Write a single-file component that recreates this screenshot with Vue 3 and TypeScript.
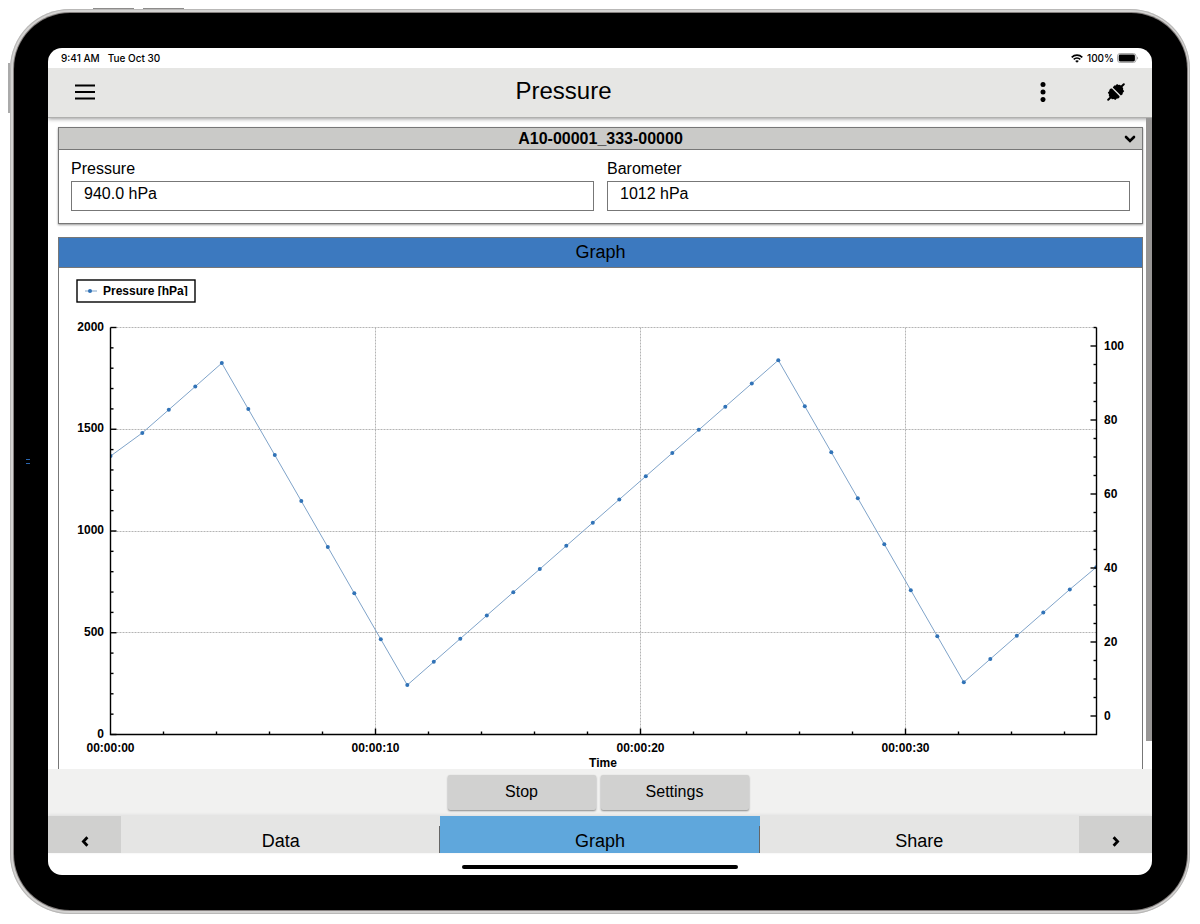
<script setup lang="ts">
import { ref } from 'vue'

interface Point { t: number; v: number }

const pressure = ref('940.0 hPa')
const barometer = ref('1012 hPa')
const activeTab = ref('Graph')
const tabs: string[] = ['Data', 'Graph', 'Share']

const readings: number[] = [
  1482, 1596, 1710, 1825, 1599, 1373, 1147, 921, 694, 468, 243,
  357, 471, 585, 699, 813, 927, 1041, 1155, 1269, 1383, 1497, 1611, 1725, 1839,
  1613, 1387, 1161, 935, 709, 483, 257, 371, 485, 599, 713, 822,
]
const points: Point[] = [{ t: 0, v: 1368 }, ...readings.map((v, i) => ({ t: i + 1.2, v }))]

const left = 51.5
const right = 1037.5
const top = 59.5
const bottom = 466.5
const perSecond = 26.5

const sx = (t: number): number => left + t * perSecond
const sy = (v: number): number => bottom - (v / 2000) * (bottom - top)
const sr = (v: number): number => bottom - ((v + 5) / 110) * (bottom - top)
const crisp = (n: number): number => Math.floor(n) + 0.5

const range = (from: number, to: number, step: number): number[] =>
  Array.from({ length: Math.floor((to - from) / step) + 1 }, (_, i) => from + i * step)

const leftTicks = range(0, 2000, 100)
const leftLabels = range(0, 2000, 500)
const rightTicks = range(0, 100, 5)
const rightLabels = range(0, 100, 20)
const timeTicks = range(2, 36, 2)
const timeLabels = range(0, 30, 10)
const clock = (s: number): string => `00:00:${String(s).padStart(2, '0')}`
const line = points.map((p) => `${sx(p.t)},${sy(p.v)}`).join(' ')
</script>

<template>
  <div class="page">
    <div class="device">
      <span class="hw power"></span>
      <span class="hw vol-a"></span>
      <span class="hw vol-b"></span>
      <div class="bezel">
        <span class="camera"></span>
        <div class="screen">
          <div class="status">
            <span>9:41 AM</span>
            <span>Tue Oct 30</span>
            <span class="spacer"></span>
            <svg class="wifi" width="12" height="9" viewBox="0 0 12 9" fill="none" stroke="#000" stroke-width="1.6">
              <path d="M0.7 3.4C3.7 0.4 8.3 0.4 11.3 3.4" />
              <path d="M2.7 5.4C4.6 3.6 7.4 3.6 9.3 5.4" />
              <path d="M6 8.8L4.2 6.9C5.2 6 6.8 6 7.8 6.9Z" fill="#000" stroke="none" />
            </svg>
            <span class="percent">100%</span>
            <svg width="22" height="10" viewBox="0 0 22 10">
              <rect x="0.5" y="0.5" width="18.5" height="9" rx="2.6" fill="#fff" stroke="#aaa" />
              <rect x="1.7" y="1.6" width="16.2" height="6.8" rx="1.4" fill="#000" />
              <path d="M20.2 3.4c1.2.5 1.2 2.7 0 3.2z" fill="#999" />
            </svg>
          </div>

          <header class="appbar">
            <button type="button" aria-label="Menu">
              <svg width="20" height="16" viewBox="0 0 20 16"><path d="M0 1.5h20M0 8h20M0 14.5h20" stroke="#000" stroke-width="2" /></svg>
            </button>
            <h1>Pressure</h1>
            <button type="button" aria-label="More">
              <svg width="6" height="20" viewBox="0 0 6 20"><circle cx="3" cy="2.6" r="2.5" /><circle cx="3" cy="10" r="2.5" /><circle cx="3" cy="17.6" r="2.5" /></svg>
            </button>
            <button type="button" aria-label="Connection">
              <svg width="18" height="18" viewBox="0 0 18 18">
                <path d="M1.2 16.8L4 14M14 4l2.8-2.8" stroke="#000" stroke-width="2" stroke-linecap="round" />
                <path d="M3.8 5.6L5 5.6L12.6 13.2L12.4 14.4L11.2 15.6L9.8 15.6L8.4 17L6.6 16L5 16.2L1.8 13L2 11.4L0.8 9.6L2.2 8.2L2.4 6.8Z" />
                <path d="M5.8 4.4L7.2 2.6L8.6 2.4L10 1L11.6 2L13 1.8L16.2 5L16 6.6L17.2 8.2L15.8 9.8L15.6 11.2L13.9 12.4Z" />
              </svg>
            </button>
          </header>

          <main class="content">
            <div class="cards">
              <section class="card sensor">
                <button type="button" class="sensor-head">
                  <span>A10-00001_333-00000</span>
                  <svg width="12" height="8" viewBox="0 0 12 8" fill="none" stroke="#000" stroke-width="2.6" stroke-linecap="round"><path d="M2 2l4 4 4-4" /></svg>
                </button>
                <div class="fields">
                  <div class="field">
                    <label for="pressure">Pressure</label>
                    <input id="pressure" v-model="pressure" type="text" readonly />
                  </div>
                  <div class="field">
                    <label for="barometer">Barometer</label>
                    <input id="barometer" v-model="barometer" type="text" readonly />
                  </div>
                </div>
              </section>

              <section class="card graph">
                <h2>Graph</h2>
                <svg class="chart" viewBox="0 0 1083 501" role="img" aria-label="Pressure over time">
                  <defs>
                    <clipPath id="plot"><rect :x="left" :y="top" :width="right - left" :height="bottom - top" /></clipPath>
                    <clipPath id="legend"><rect x="18" y="12" width="118" height="16" /></clipPath>
                  </defs>
                  <rect class="legend-box" x="18" y="12" width="118" height="22" />
                  <path class="series" d="M26 23h12" />
                  <circle class="dot" cx="31" cy="23" r="2" />
                  <text x="44" y="27" clip-path="url(#legend)">Pressure [hPa]</text>

                  <g class="grid">
                    <path v-for="v in leftLabels.slice(1)" :key="'h' + v" :d="`M${left} ${crisp(sy(v))}H${right}`" />
                    <path v-for="t in timeLabels.slice(1)" :key="'v' + t" :d="`M${crisp(sx(t))} ${top}V${bottom}`" />
                  </g>

                  <g clip-path="url(#plot)">
                    <polyline class="series" :points="line" />
                    <circle v-for="p in points" :key="p.t" class="dot" :cx="sx(p.t)" :cy="sy(p.v)" r="2" />
                  </g>

                  <g class="axis">
                    <path :d="`M${left} ${top}V${bottom}H${right}V${top}`" />
                    <path v-for="v in leftTicks" :key="'l' + v" :d="`M${left} ${sy(v)}h${v % 500 ? 3 : 6}`" />
                    <path v-for="v in rightTicks" :key="'r' + v" :d="`M${right} ${sr(v)}h${v % 20 ? -3 : -6}`" />
                    <path :d="`M${right} ${top}h-3`" />
                    <path v-for="t in timeTicks" :key="'t' + t" :d="`M${sx(t)} ${bottom}v${t % 10 ? -3 : -6}`" />
                  </g>

                  <text v-for="v in leftLabels" :key="'ll' + v" x="45" :y="Math.round(sy(v) + 3)" text-anchor="end">{{ v }}</text>
                  <text v-for="v in rightLabels" :key="'rl' + v" x="1045" :y="Math.round(sr(v) + 4)">{{ v }}</text>
                  <text v-for="t in timeLabels" :key="'tl' + t" :x="sx(t)" y="484" text-anchor="middle">{{ clock(t) }}</text>
                  <text x="544" y="499" text-anchor="middle">Time</text>
                </svg>
              </section>
            </div>
            <div class="scrollbar"></div>
          </main>

          <div class="actions">
            <button type="button">Stop</button>
            <button type="button">Settings</button>
          </div>

          <nav class="tabs">
            <button type="button" class="arrow" aria-label="Previous">
              <svg width="8" height="11" viewBox="0 0 8 11"><path d="M6.4 1.2L2.4 5.5l4 4.3" /></svg>
            </button>
            <button
              v-for="tab in tabs"
              :key="tab"
              type="button"
              class="tab"
              :class="{ active: tab === activeTab }"
              @click="activeTab = tab"
            >{{ tab }}</button>
            <button type="button" class="arrow" aria-label="Next">
              <svg width="8" height="11" viewBox="0 0 8 11"><path d="M1.6 1.2l4 4.3-4 4.3" /></svg>
            </button>
          </nav>

          <div class="home"><span></span></div>
        </div>
      </div>
    </div>
  </div>
</template>

<style>
body {
  margin: 0;
  background: #fff;
}
</style>

<style scoped>
.page {
  padding: 9px 10px;
  font-family: "Liberation Sans", Arial, Helvetica, sans-serif;
  font-size: 16px;
  color: #000;
}
.page * {
  box-sizing: border-box;
}
button {
  margin: 0;
  padding: 0;
  border: 0;
  background: none;
  color: inherit;
  font: inherit;
  display: flex;
  align-items: center;
  justify-content: center;
}
.device {
  position: relative;
  padding: 4px 3px 4px 4px;
  border-radius: 60px;
  background: #d3d2d1;
  box-shadow: inset 0 0 0 1px #b9b8b7;
}
.hw {
  position: absolute;
  background: #8d8c8b;
}
.power {
  left: -2px;
  top: 54px;
  width: 2px;
  height: 50px;
  background: #aaa;
}
.vol-a,
.vol-b {
  top: -1px;
  height: 1px;
  width: 41px;
}
.vol-a {
  left: 83px;
}
.vol-b {
  left: 133px;
}
.bezel {
  position: relative;
  padding: 35px 35px 35px 34px;
  border-radius: 56px;
  background: #000;
  box-shadow: 0 0 0 1px #85807f;
}
.camera {
  position: absolute;
  left: 12px;
  top: 446px;
  width: 4px;
  height: 5px;
  border-top: 1px solid #2a66b0;
  border-bottom: 1px solid #2a66b0;
}
.screen {
  border-radius: 14px;
  overflow: hidden;
  background: #fff;
}
.status {
  height: 20px;
  padding: 0 13px;
  display: flex;
  align-items: center;
  gap: 8px;
  font: 500 10px/20px Inter, "Liberation Sans", sans-serif;
}
.spacer {
  flex: 1;
}
.wifi {
  margin-right: -4px;
}
.percent {
  margin-right: -5px;
}
.appbar {
  position: relative;
  height: 50px;
  display: grid;
  grid-template-columns: 73px 1fr 73px 73px;
  background: #e6e6e4;
  box-shadow: inset 0 -1px #b0b0ae, 0 1px 4px #999;
  clip-path: inset(0 0 -6px 0);
}
.appbar button {
  padding-bottom: 2px;
}
h1,
h2 {
  margin: 0;
  font-weight: 400;
  text-align: center;
}
h1 {
  font-size: 24px;
  line-height: 46px;
}
.content {
  display: flex;
}
.cards {
  flex: 1;
  min-width: 0;
  padding: 9px 3px 0 10px;
  display: flex;
  flex-direction: column;
  gap: 13px;
}
.scrollbar {
  width: 6px;
  margin-bottom: 28px;
  background: #989695;
}
.card {
  border: 1px solid #777;
}
.sensor {
  box-shadow: 0 1px 2px #999;
}
.sensor-head {
  position: relative;
  width: 100%;
  height: 22px;
  padding: 0 6px;
  border-bottom: 1px solid #777;
  background: #cacac8;
  font-weight: 700;
  line-height: 21px;
}
.sensor-head span {
  flex: 1;
  padding-left: 12px;
}
.fields {
  padding: 10px 12px 12px;
  display: grid;
  grid-template-columns: 1fr 1fr;
  gap: 13px;
}
.field {
  display: flex;
  flex-direction: column;
  gap: 3px;
}
label {
  line-height: 18px;
}
input {
  width: 100%;
  height: 30px;
  margin: 0;
  padding: 0 12px 4px;
  border: 1px solid #777;
  border-radius: 0;
  background: #fff;
  color: #000;
  font: inherit;
  outline: 0;
}
.graph {
  border-bottom: 0;
}
h2 {
  height: 30px;
  border-bottom: 1px solid #777;
  background: #3c79bf;
  font-size: 18px;
  line-height: 28px;
}
.chart {
  display: block;
  width: 100%;
}
.chart text {
  font-size: 12px;
  font-weight: 700;
}
.legend-box {
  fill: #fff;
  stroke: #000;
  stroke-width: 1.4;
}
.series {
  fill: none;
  stroke: #7fa3c9;
  stroke-width: 1;
}
.dot {
  fill: #3173b7;
}
.grid path {
  stroke: #b4b4b4;
  stroke-dasharray: 2 1;
}
.axis path {
  fill: none;
  stroke: #000;
  stroke-width: 1.4;
}
.actions {
  height: 47px;
  padding-top: 6px;
  display: flex;
  justify-content: center;
  align-items: flex-start;
  gap: 5px;
  padding-right: 4px;
  background: #f1f1f0;
}
.actions button {
  width: 148px;
  height: 35px;
  padding-bottom: 2px;
  border-radius: 2px;
  background: #d1d1d0;
  box-shadow: 0 1px 2px #888;
}
.tabs {
  height: 37px;
  display: grid;
  grid-template-columns: 73px 1fr 1fr 1fr 73px;
  background: #e5e5e4;
  box-shadow: 0 -1px 3px #ddd;
}
.tabs button {
  padding-top: 13px;
}
.tab {
  position: relative;
  font-size: 18px;
  line-height: 22px;
}
.tab.active {
  background: #5fa7dc;
}
.tab.active::before,
.tab.active::after {
  content: "";
  position: absolute;
  top: 10px;
  bottom: 0;
  width: 1px;
  background: #666;
}
.tab.active::before {
  left: -1px;
}
.tab.active::after {
  right: 0;
}
.arrow {
  background: #d0d0cf;
}
.arrow path {
  fill: none;
  stroke: #000;
  stroke-width: 2.8;
}
.home {
  height: 22px;
  padding-top: 12px;
}
.home span {
  display: block;
  width: 25%;
  height: 4px;
  margin: 0 auto;
  border-radius: 2px;
  background: #000;
}
</style>
